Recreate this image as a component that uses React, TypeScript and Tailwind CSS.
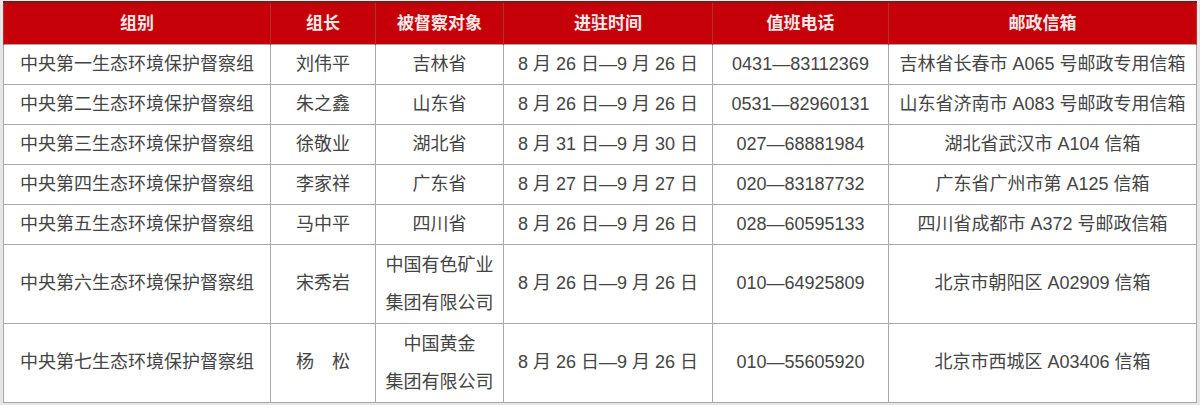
import React from "react";

const rows: [string, string, string[], string, string, string][] = [
  ["中央第一生态环境保护督察组", "刘伟平", ["吉林省"], "8 月 26 日—9 月 26 日", "0431—83112369", "吉林省长春市 A065 号邮政专用信箱"],
  ["中央第二生态环境保护督察组", "朱之鑫", ["山东省"], "8 月 26 日—9 月 26 日", "0531—82960131", "山东省济南市 A083 号邮政专用信箱"],
  ["中央第三生态环境保护督察组", "徐敬业", ["湖北省"], "8 月 31 日—9 月 30 日", "027—68881984", "湖北省武汉市 A104 信箱"],
  ["中央第四生态环境保护督察组", "李家祥", ["广东省"], "8 月 27 日—9 月 27 日", "020—83187732", "广东省广州市第 A125 信箱"],
  ["中央第五生态环境保护督察组", "马中平", ["四川省"], "8 月 26 日—9 月 26 日", "028—60595133", "四川省成都市 A372 号邮政信箱"],
  ["中央第六生态环境保护督察组", "宋秀岩", ["中国有色矿业", "集团有限公司"], "8 月 26 日—9 月 26 日", "010—64925809", "北京市朝阳区 A02909 信箱"],
  ["中央第七生态环境保护督察组", "杨\u3000松", ["中国黄金", "集团有限公司"], "8 月 26 日—9 月 26 日", "010—55605920", "北京市西城区 A03406 信箱"],
];

const headers = ["组别", "组长", "被督察对象", "进驻时间", "值班电话", "邮政信箱"];
const widths = ["w-[267px]", "w-[105px]", "w-[128px]", "w-[209px]", "w-[176px]", "w-[308px]"];

export default function App() {
  return (
    <div
      className="w-[1200px] h-[405px] bg-[#e6e6e6] pl-[3px] pt-[1px] overflow-hidden"
      style={{ fontFamily: '"Liberation Sans", "Noto Sans CJK SC", sans-serif' }}
    >
      <table className="border-collapse table-fixed w-[1194px] bg-white text-[18px] text-[#444444]">
        <thead>
          <tr className="h-[42px] bg-[#c50008] border-t-2 border-[#6b2020]">
            {headers.map((h, i) => (
              <th
                key={h}
                className={`${widths[i]} text-center font-bold text-[17px] text-[#fbe9e9] border-x border-[#b03030] p-0`}
              >
                {h}
              </th>
            ))}
          </tr>
        </thead>
        <tbody>
          {rows.map((r, ri) => {
            const tall = r[2].length > 1;
            return (
              <tr key={ri} className={tall ? "h-[79px]" : "h-[40px]"}>
                <td className="border border-[#a8a8a8] text-center p-0 whitespace-nowrap">{r[0]}</td>
                <td className="border border-[#a8a8a8] text-center p-0 whitespace-nowrap">{r[1]}</td>
                <td className="border border-[#a8a8a8] text-center p-0 whitespace-nowrap leading-[38px]">
                  {r[2].map((t) => (
                    <div key={t}>{t}</div>
                  ))}
                </td>
                <td className="border border-[#a8a8a8] text-center p-0 whitespace-nowrap">{r[3]}</td>
                <td className="border border-[#a8a8a8] text-center p-0 whitespace-nowrap">{r[4]}</td>
                <td className="border border-[#a8a8a8] text-center p-0 whitespace-nowrap">{r[5]}</td>
              </tr>
            );
          })}
        </tbody>
      </table>
    </div>
  );
}
